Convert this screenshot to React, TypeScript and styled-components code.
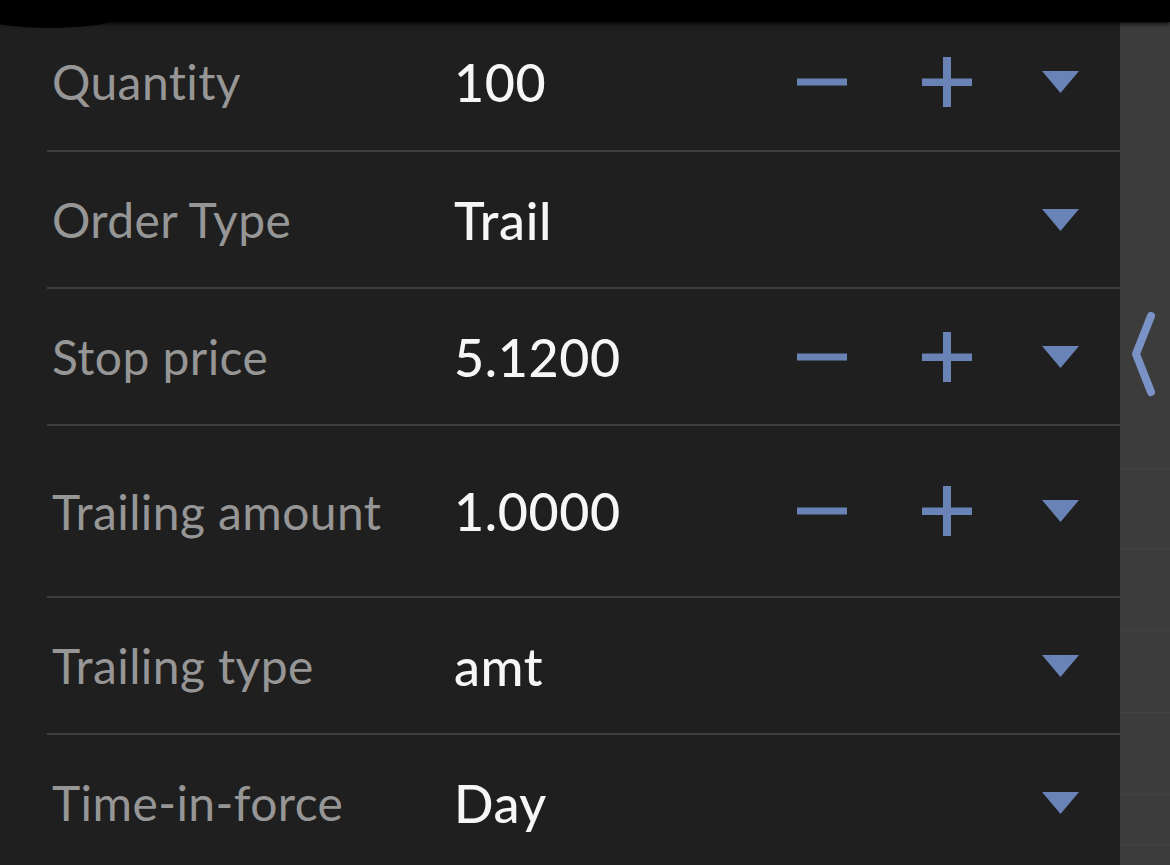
import styled, { createGlobalStyle } from "styled-components";

const GlobalStyle = createGlobalStyle`
  html, body {
    margin: 0;
    padding: 0;
    background: #1f1f1f;
  }
  body {
    font-family: Lato, "Noto Sans", sans-serif;
  }
`;

const Page = styled.div`
  position: relative;
  display: flex;
  width: 1170px;
  height: 865px;
  overflow: hidden;
  background: #1f1f1f;
`;

const TopShade = styled.div`
  position: absolute;
  top: 0;
  left: 0;
  right: 0;
  height: 22px;
  background: #000;
  box-shadow: 0 2px 4px rgba(0, 0, 0, 0.8);
  z-index: 2;

  &::after {
    content: "";
    position: absolute;
    left: -20px;
    top: 0;
    width: 140px;
    height: 28px;
    border-radius: 0 0 70px 70px / 0 0 12px 12px;
    background: #000;
  }
`;

const Panel = styled.div`
  flex: 1;
  padding-top: 13px;
  padding-left: 47px;
`;

const List = styled.ul`
  list-style: none;
  margin: 0;
  padding: 0;
`;

const Row = styled.li<{ $height: number }>`
  box-sizing: border-box;
  height: ${p => p.$height}px;
  display: grid;
  grid-template-columns: 402px 1fr auto;
  align-items: center;
  padding-left: 5px;
  border-bottom: 2px solid #3e3e3e;
`;

const Label = styled.span`
  font-size: 48px;
  font-weight: 400;
  letter-spacing: 0.4px;
  color: #969696;
  white-space: nowrap;
`;

const Value = styled.span`
  font-size: 52px;
  font-weight: 500;
  letter-spacing: 0.6px;
  color: #f6f6f6;
  white-space: nowrap;
`;

const Controls = styled.div`
  display: flex;
  align-items: center;
  padding-right: 41px;
`;

const IconButton = styled.button<{ $w: number; $gap: number }>`
  display: flex;
  align-items: center;
  justify-content: center;
  width: ${p => p.$w}px;
  margin-left: ${p => p.$gap}px;
  padding: 0;
  border: 0;
  background: none;
  color: #6983b6;
`;

const SideStrip = styled.aside`
  width: 50px;
  background: #3c3c3c;
  display: flex;
  flex-direction: column;
  align-items: center;
`;

const StripHandle = styled.div`
  margin-top: 310px;
  height: 90px;
  color: #7b92c6;
`;

const StripLine = styled.div<{ $top: number }>`
  margin-top: ${p => p.$top}px;
  width: 100%;
  height: 1px;
  background: #434343;
`;

const Minus = () => (
  <svg width="50" height="10" viewBox="0 0 50 10">
    <rect x="0" y="1.5" width="50" height="7" fill="currentColor" />
  </svg>
);

const Plus = () => (
  <svg width="50" height="50" viewBox="0 0 50 50">
    <rect x="0" y="21.5" width="50" height="7.5" fill="currentColor" />
    <rect x="21" y="0" width="8" height="50" fill="currentColor" />
  </svg>
);

const Caret = () => (
  <svg width="37" height="22" viewBox="0 0 37 22">
    <polygon points="0,0 37,0 18.5,22" fill="currentColor" />
  </svg>
);

const Chevron = () => (
  <svg width="30" height="90" viewBox="0 0 30 90">
    <polyline
      points="21,6 6,44 21,82"
      fill="none"
      stroke="currentColor"
      strokeWidth="8"
      strokeLinecap="round"
      strokeLinejoin="round"
    />
  </svg>
);

interface Field {
  label: string;
  value: string;
  stepper: boolean;
  height: number;
}

const fields: Field[] = [
  { label: "Quantity", value: "100", stepper: true, height: 139 },
  { label: "Order Type", value: "Trail", stepper: false, height: 137 },
  { label: "Stop price", value: "5.1200", stepper: true, height: 137 },
  { label: "Trailing amount", value: "1.0000", stepper: true, height: 172 },
  { label: "Trailing type", value: "amt", stepper: false, height: 137 },
  { label: "Time-in-force", value: "Day", stepper: false, height: 137 },
];

export default function App() {
  return (
    <Page>
      <GlobalStyle />
      <TopShade />
      <Panel>
        <List>
          {fields.map(f => (
            <Row key={f.label} $height={f.height}>
              <Label>{f.label}</Label>
              <Value>{f.value}</Value>
              <Controls>
                {f.stepper && (
                  <>
                    <IconButton $w={50} $gap={0}><Minus /></IconButton>
                    <IconButton $w={50} $gap={75}><Plus /></IconButton>
                  </>
                )}
                <IconButton $w={37} $gap={70}><Caret /></IconButton>
              </Controls>
            </Row>
          ))}
        </List>
      </Panel>
      <SideStrip>
        <StripHandle><Chevron /></StripHandle>
        <StripLine $top={68} />
        <StripLine $top={79} />
        <StripLine $top={81} />
        <StripLine $top={81} />
        <StripLine $top={81} />
        <StripLine $top={49} />
      </SideStrip>
    </Page>
  );
}
